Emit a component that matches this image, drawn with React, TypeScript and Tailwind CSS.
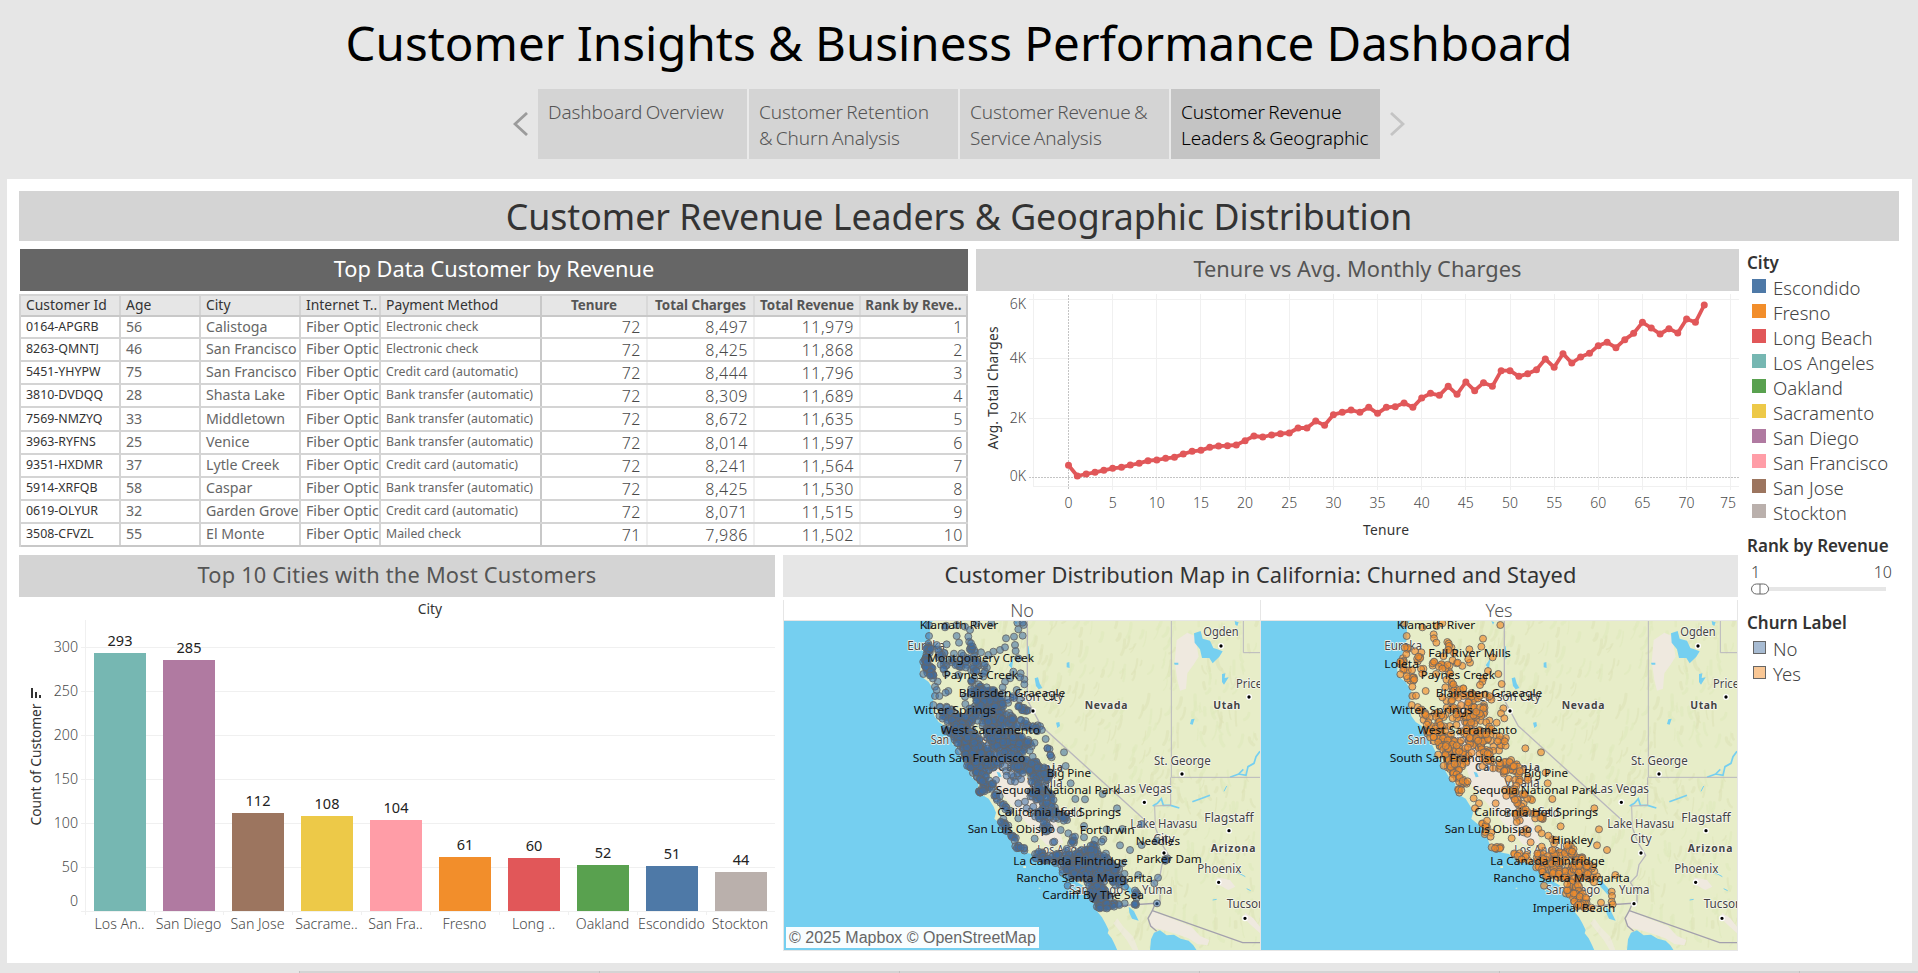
import type { ReactNode } from 'react';

const TABS = [
  { lines: ['Dashboard Overview'], active: false },
  { lines: ['Customer Retention', '& Churn Analysis'], active: false },
  { lines: ['Customer Revenue &', 'Service Analysis'], active: false },
  { lines: ['Customer Revenue', 'Leaders & Geographic'], active: true },
];

const ROWS = [
  ['0164-APGRB', '56', 'Calistoga', 'Electronic check', '72', '8,497', '11,979'],
  ['8263-QMNTJ', '46', 'San Francisco', 'Electronic check', '72', '8,425', '11,868'],
  ['5451-YHYPW', '75', 'San Francisco', 'Credit card (automatic)', '72', '8,444', '11,796'],
  ['3810-DVDQQ', '28', 'Shasta Lake', 'Bank transfer (automatic)', '72', '8,309', '11,689'],
  ['7569-NMZYQ', '33', 'Middletown', 'Bank transfer (automatic)', '72', '8,672', '11,635'],
  ['3963-RYFNS', '25', 'Venice', 'Bank transfer (automatic)', '72', '8,014', '11,597'],
  ['9351-HXDMR', '37', 'Lytle Creek', 'Credit card (automatic)', '72', '8,241', '11,564'],
  ['5914-XRFQB', '58', 'Caspar', 'Bank transfer (automatic)', '72', '8,425', '11,530'],
  ['0619-OLYUR', '32', 'Garden Grove', 'Credit card (automatic)', '72', '8,071', '11,515'],
  ['3508-CFVZL', '55', 'El Monte', 'Mailed check', '71', '7,986', '11,502'],
];

const CITIES = [
  { name: 'Escondido', color: 'bg-[#4e79a7]' },
  { name: 'Fresno', color: 'bg-[#f28e2b]' },
  { name: 'Long Beach', color: 'bg-[#e15759]' },
  { name: 'Los Angeles', color: 'bg-[#76b7b2]' },
  { name: 'Oakland', color: 'bg-[#59a14f]' },
  { name: 'Sacramento', color: 'bg-[#edc948]' },
  { name: 'San Diego', color: 'bg-[#b07aa1]' },
  { name: 'San Francisco', color: 'bg-[#ff9da7]' },
  { name: 'San Jose', color: 'bg-[#9c755f]' },
  { name: 'Stockton', color: 'bg-[#bab0ac]' },
];

const BARS = [
  { label: 'Los An..', value: 293, top: 56, color: '#76b7b2' },
  { label: 'San Diego', value: 285, top: 63, color: '#b07aa1' },
  { label: 'San Jose', value: 112, top: 216, color: '#9c755f' },
  { label: 'Sacrame..', value: 108, top: 219, color: '#edc948' },
  { label: 'San Fra..', value: 104, top: 223, color: '#ff9da7' },
  { label: 'Fresno', value: 61, top: 260, color: '#f28e2b' },
  { label: 'Long ..', value: 60, top: 261, color: '#e15759' },
  { label: 'Oakland', value: 52, top: 268, color: '#59a14f' },
  { label: 'Escondido', value: 51, top: 269, color: '#4e79a7' },
  { label: 'Stockton', value: 44, top: 275, color: '#bab0ac' },
];

/* Average total charge per tenure month, in thirds of a pixel from the plot's top. */
const LINE = [
  676, 708, 702, 697, 691, 685, 682, 675, 670, 662, 660, 655, 652, 642, 634, 631, 622, 618, 617, 615, 602, 588, 591,
  585, 581, 579, 564, 564, 543, 556, 524, 517, 510, 517, 502, 520, 502, 500, 489, 502, 474, 460, 466, 439, 463, 426,
  452, 428, 439, 392, 392, 409, 401, 389, 357, 382, 341, 369, 351, 340, 317, 307, 323, 299, 280, 247, 264, 282, 266,
  279, 237, 247, 195,
];

function PanelTitle({ className, children }: { className: string; children: ReactNode }) {
  return (
    <h3 className={`flex h-[42px] shrink-0 items-center justify-center pb-[3px] text-[21.8px] leading-none ${className}`}>
      {children}
    </h3>
  );
}

function StoryNav() {
  return (
    <nav className="flex h-[70px] items-center justify-center">
      <svg className="mr-[10px] mb-px h-6 w-[15px]" viewBox="0 0 15 24" fill="none" stroke="#9b9b9b" strokeWidth="2.8">
        <path d="M14 1 L2 12 L14 23" />
      </svg>
      <div className="flex h-full gap-[2px] bg-[#eaeaea]">
        {TABS.map((t) => (
          <div
            key={t.lines[0]}
            className={`w-[209px] pt-[10px] pl-[10px] text-[19px] leading-[26px] font-light tracking-[-0.1px] [word-spacing:-1.5px] whitespace-nowrap ${
              t.active ? 'bg-[#c4c4c4] text-black' : 'bg-[#d4d4d4] text-[#555]'
            }`}
          >
            {t.lines.map((l) => (
              <div key={l}>{l}</div>
            ))}
          </div>
        ))}
      </div>
      <svg className="mb-px ml-[10px] h-6 w-[15px]" viewBox="0 0 15 24" fill="none" stroke="#c4c4c4" strokeWidth="2.8">
        <path d="M1 1 L13 12 L1 23" />
      </svg>
    </nav>
  );
}

const GRID = 'grid grid-cols-[100px_80px_100px_80px_161px_106px_107px_106px_107px]';

function CustomerTable() {
  const dim = 'border-r-2 border-[#d4d4d4] pl-[5px] flex items-center overflow-hidden whitespace-nowrap';
  const num = 'border-r-2 border-[#f0f0f0] pr-[5px] flex items-center justify-end text-[16px] font-light tracking-[0.5px] text-[#4a4a4a]';
  const head = 'flex items-center justify-center border-r-2 border-[#d9d9d9] pt-px text-[13.4px] font-bold text-[#555] whitespace-nowrap';
  return (
    <div className="flex h-[253px] w-[949px] flex-col border-l-2 border-[#d4d4d4] leading-none">
      <div className={`${GRID} h-[23px] border-t-2 border-b-2 border-t-[#d4d4d4] border-b-[#c8c8c8] bg-[#e6e6e6] text-[13.9px] text-[#333]`}>
        <div className={`${dim} pb-px`}>Customer Id</div>
        <div className={`${dim} pb-px`}>Age</div>
        <div className={`${dim} pb-px`}>City</div>
        <div className={`${dim} pb-px`}>Internet T..</div>
        <div className="flex items-center border-r-2 border-[#c8c8c8] pb-px pl-[5px]">Payment Method</div>
        <div className={head}>Tenure</div>
        <div className={head}>Total Charges</div>
        <div className={head}>Total Revenue</div>
        <div className="flex items-center justify-center border-r-2 border-[#c8c8c8] pt-px text-[13.4px] font-bold whitespace-nowrap text-[#555]">
          Rank by Reve..
        </div>
      </div>
      {ROWS.map((r, i) => (
        <div
          key={r[0]}
          className={`${GRID} border-b-2 text-[14.2px] text-[#666] ${i === 0 ? 'h-[22px]' : i === 4 ? 'h-[24px]' : 'h-[23px]'} ${
            i === 9 ? 'border-[#c8c8c8]' : 'border-[#d4d4d4]'
          }`}
        >
          <div className={`${dim} text-[12.4px] text-[#333]`}>{r[0]}</div>
          <div className={dim}>{r[1]}</div>
          <div className={dim}>{r[2]}</div>
          <div className={dim}>Fiber Optic</div>
          <div className="flex items-center border-r-2 border-[#c8c8c8] pl-[5px] text-[12.3px] whitespace-nowrap">{r[3]}</div>
          <div className={num}>{r[4]}</div>
          <div className={num}>{r[5]}</div>
          <div className={num}>{r[6]}</div>
          <div className="flex items-center justify-end border-r-2 border-[#c8c8c8] pr-[3px] text-[16px] font-light tracking-[0.5px] text-[#4a4a4a]">
            {i + 1}
          </div>
        </div>
      ))}
    </div>
  );
}

function LineChart() {
  const x = (m: number) => 92.5 + m * 8.83;
  const points = LINE.map((v, m) => ({ x: x(m), y: v / 3 - 51 }));
  return (
    <svg className="block h-[256px] w-[763px]" viewBox="0 0 763 256">
      <g stroke="#f0f0f0" shapeRendering="crispEdges">
        <path d="M57.5 3V196M57.5 195.5H763M57.5 8.5H763M57.5 67.5H763M57.5 127.5H763M53 8.5H58M53 67.5H58M53 127.5H58" />
        {Array.from({ length: 15 }, (_, i) => (
          <path key={i} d={`M${x((i + 1) * 5)} 3V199`} />
        ))}
      </g>
      <path d="M92.5 4V199M53 186.5H763" stroke="#c4c4c4" strokeDasharray="2 1" shapeRendering="crispEdges" />
      <polyline points={points.map((p) => `${p.x},${p.y}`).join(' ')} fill="none" stroke="#e15759" strokeWidth="3.8" strokeLinejoin="round" />
      {points.map((p, i) => (
        <circle key={i} cx={p.x} cy={p.y} r="3.5" fill="#e15759" />
      ))}
      <g fontSize="14" fontWeight="300" fill="#4a4a4a">
        {[['6K', 17.5], ['4K', 71.5], ['2K', 131.5], ['0K', 189.5]].map(([t, y]) => (
          <text key={t} x="50" y={y} textAnchor="end">{t}</text>
        ))}
        {Array.from({ length: 16 }, (_, i) => (
          <text key={i} x={i === 15 ? 752 : x(i * 5)} y="217" textAnchor="middle">{i * 5}</text>
        ))}
      </g>
      <g fontSize="13.8" fill="#333">
        <text x="410" y="244" textAnchor="middle" textLength="46">Tenure</text>
        <text transform="translate(22 158.5) rotate(-90)" textLength="123">Avg. Total Charges</text>
      </g>
    </svg>
  );
}

function BarChart() {
  return (
    <svg className="block h-[366px] w-[756px]" viewBox="0 0 756 366">
      <text x="411" y="17" fontSize="13.8" fill="#333" textAnchor="middle">City</text>
      <g stroke="#f0f0f0" shapeRendering="crispEdges">
        <path d="M66.5 23V318" />
        {[50, 94, 138, 182, 226, 270, 314].map((y) => (
          <path key={y} d={`M62 ${y + 0.5}H756`} />
        ))}
        {BARS.slice(1).map((b, i) => (
          <path key={b.label} d={`M${135.5 + i * 69} 314V318`} />
        ))}
      </g>
      <g fontSize="14.2" fontWeight="300" fill="#4a4a4a" textAnchor="end">
        {[['300', 55], ['250', 99], ['200', 143], ['150', 187], ['100', 231], ['50', 275], ['0', 309]].map(([t, y]) => (
          <text key={t} x="59" y={y}>{t}</text>
        ))}
      </g>
      {BARS.map((b, i) => (
        <g key={b.label} textAnchor="middle">
          <rect x={75 + i * 69} y={b.top} width="52" height={314 - b.top} fill={b.color} />
          <text x={101 + i * 69} y={b.top - 7} fontSize="14.5" fill="#222">{b.value}</text>
          <text x={i === 9 ? 721 : 100.5 + i * 69} y="332" fontSize="14.2" fontWeight="300" fill="#4a4a4a">{b.label}</text>
        </g>
      ))}
      <text transform="translate(22 228.5) rotate(-90)" fontSize="13.8" fill="#333" textLength="122">Count of Customer</text>
      <path d="M12 91h2v10h-2zM16 95h2v6h-2zM20 98h2v3h-2z" fill="#333" />
    </svg>
  );
}

function makeRandom(seed: number) {
  let s = seed;
  return () => {
    s = (s * 1664525 + 1013904223) % 4294967296;
    return s / 4294967296;
  };
}

/* Customer concentrations: start x/y, end x/y, spread, count. Units are thirds of a pixel. */
const CLUSTERS = [
  [448, 165, 436, 225, 9, 22], [436, 215, 468, 275, 11, 32], [480, 185, 492, 245, 13, 16], [530, 210, 612, 240, 22, 38],
  [570, 165, 590, 195, 12, 10], [580, 270, 600, 310, 16, 14], [585, 305, 700, 330, 22, 44], [625, 335, 668, 440, 48, 170],
  [718, 350, 742, 366, 8, 10], [590, 330, 580, 405, 24, 34], [690, 392, 778, 415, 13, 30], [485, 365, 560, 400, 22, 46],
  [520, 412, 585, 470, 30, 120], [560, 470, 620, 520, 34, 150], [575, 525, 605, 550, 18, 36], [600, 560, 628, 590, 17, 28],
  [605, 600, 605, 603, 9, 10], [620, 445, 735, 465, 30, 110], [655, 500, 785, 545, 26, 80], [645, 605, 685, 670, 9, 15],
  [660, 688, 705, 745, 10, 20], [708, 772, 735, 776, 7, 10], [745, 520, 800, 565, 22, 44], [755, 585, 810, 640, 28, 64],
  [760, 668, 850, 678, 17, 36], [850, 682, 855, 685, 10, 8], [775, 695, 820, 728, 13, 11], [765, 794, 835, 812, 12, 28],
  [840, 797, 965, 805, 22, 90], [862, 830, 965, 855, 30, 180], [960, 810, 1018, 868, 24, 80], [935, 770, 940, 785, 14, 18],
  [940, 890, 975, 935, 24, 90], [955, 948, 1015, 945, 9, 24], [805, 470, 815, 500, 6, 6], [1067, 905, 1067, 945, 6, 9],
  [1156, 806, 1160, 812, 6, 4], [880, 750, 890, 760, 14, 6], [695, 555, 735, 545, 24, 18],
];

const NO_POINTS = [
  447, 106, 447, 138, 498, 107, 530, 105, 555, 110, 590, 100, 634, 100, 495, 112, 530, 138, 537, 158, 570, 120, 565, 140,
  573, 160, 500, 163, 470, 165, 603, 187, 545, 190, 660, 180, 675, 172, 640, 185, 625, 195, 678, 145, 702, 140, 715, 118,
  731, 105, 728, 137, 705, 165, 707, 183, 715, 205, 712, 98, 728, 98, 430, 252, 465, 318, 478, 318, 505, 303, 497, 308,
  465, 290, 470, 300, 460, 345, 480, 350, 700, 245, 722, 250, 733, 268, 733, 283, 720, 262, 690, 265, 675, 275, 668, 292,
  620, 292, 640, 300, 710, 300, 555, 320, 556, 342, 535, 255, 715, 640, 715, 685, 735, 635, 740, 655, 760, 650, 764, 746,
  819, 757, 823, 755, 842, 720, 865, 730, 885, 740, 912, 708, 912, 742, 945, 750, 970, 748, 965, 755, 980, 718, 1027, 717,
  1085, 702, 1020, 766, 1050, 780, 1085, 765, 1130, 752, 797, 447, 852, 487, 857, 528, 872, 580, 886, 627, 915, 628,
  968, 612, 1011, 655, 1134, 863, 1123, 880, 1131, 940, 1075, 855, 1034, 940, 1018, 945, 1035, 890, 1027, 820, 863, 887,
  715, 350, 743, 455, 758, 500, 648, 570, 680, 557, 705, 575,
];

const YES_POINTS = [
  449, 138, 442, 100, 496, 112, 539, 108, 556, 100, 530, 133, 531, 145, 538, 158, 730, 105, 678, 146, 673, 170, 707, 202,
  576, 168, 574, 180, 637, 178, 639, 218, 634, 208, 474, 184, 489, 205, 484, 200, 527, 220, 531, 215, 556, 236, 430, 253,
  465, 240, 466, 290, 506, 303, 466, 318, 477, 317, 464, 345, 693, 243, 724, 252, 734, 282, 679, 265, 676, 275, 669, 285,
  619, 295, 556, 322, 589, 283, 565, 292, 537, 252, 739, 355, 732, 370, 742, 385, 719, 398, 805, 475, 852, 487, 866, 548,
  872, 580, 886, 627, 1012, 655, 911, 709, 1026, 718, 1020, 766, 1050, 780, 1075, 855, 861, 887, 1064, 905, 1065, 918,
  1064, 935, 1067, 943, 1032, 938, 844, 717, 854, 730, 874, 737, 764, 745, 821, 757, 854, 770, 690, 692, 650, 625,
  666, 640, 654, 655, 729, 775, 704, 772, 714, 775, 716, 640, 722, 454, 743, 454,
];

const sparse = new Set([8, 10, 19, 34, 35, 36, 38]);

function buildDots(points: number[], density: number, seed: number, skipSparse: boolean) {
  const rnd = makeRandom(seed);
  const out: [number, number][] = [];
  CLUSTERS.forEach(([x1, y1, x2, y2, spread, n], c) => {
    if (skipSparse && sparse.has(c)) return;
    for (let i = 0; i < n * density; i++) {
      const t = rnd();
      const a = rnd() * Math.PI * 2;
      const r = Math.sqrt(rnd()) * spread;
      out.push([x1 + (x2 - x1) * t + Math.cos(a) * r, y1 + (y2 - y1) * t + Math.sin(a) * r]);
    }
  });
  for (let i = 0; i < points.length; i += 2) out.push([points[i], points[i + 1]]);
  return out;
}

function buildRelief() {
  const rnd = makeRandom(77);
  const out: { d: string; light: boolean; w: number }[] = [];
  for (let i = 0; i < 620; i++) {
    const x = 560 + rnd() * 880;
    const y = 93 + rnd() * 980;
    if (x < 1010 && y > 960 && x < 560 + (y - 300) * 0.6) continue;
    if (y > 330 && x < 470 + (y - 330) * 0.75) continue;
    const len = 12 + rnd() * 34;
    const lean = x > 1180 ? rnd() * 30 - 15 : 4 + rnd() * 14;
    out.push({
      d: `M${x.toFixed(0)} ${y.toFixed(0)}q${(lean * 0.9).toFixed(0)} ${(-len * 0.3).toFixed(0)} ${lean.toFixed(0)} ${(-len).toFixed(0)}`,
      light: rnd() > 0.5,
      w: 3 + rnd() * 8,
    });
  }
  return out;
}

const RELIEF = buildRelief();

type Label = [string, number, number, number];

const SHARED_LABELS: Label[] = [
  ['Klamath River', 419, 118, 236], ['Paynes Creek', 491, 266, 223], ['Blairsden Graeagle', 536, 320, 320],
  ['Witter Springs', 401, 371, 247], ['West Sacramento', 482, 431, 298], ['South San Francisco', 398, 515, 338],
  ['Big Pine', 800, 560, 133], ['Sequoia National Park', 647, 611, 372], ['California Hot Springs', 652, 677, 371],
  ['San Luis Obispo', 563, 728, 262], ['La Canada Flintridge', 700, 824, 343], ['Rancho Santa Margarita', 709, 875, 409],
];
const NO_LABELS: Label[] = [
  ...SHARED_LABELS, ['Montgomery Creek', 442, 215, 320], ['Fort Irwin', 899, 731, 165], ['Needles', 1067, 766, 133],
  ['Parker Dam', 1069, 818, 196], ['Cardiff By The Sea', 787, 926, 305],
];
const YES_LABELS: Label[] = [
  ...SHARED_LABELS, ['Fall River Mills', 514, 200, 247], ['Loleta', 382, 235, 104], ['Hinkley', 884, 761, 124],
  ['Imperial Beach', 827, 965, 248],
];

const PLACES: Label[] = [
  ['Eureka', 382, 179, 113], ['San Francisco', 452, 462, 205], ['Carson City', 662, 334, 189], ['Visalia', 742, 590, 106],
  ['Bakersfield', 742, 680, 165], ['Los Angeles', 772, 792, 178], ['San Diego', 866, 911, 164], ['Yuma', 1086, 911, 91],
  ['Ogden', 1270, 138, 106], ['Price', 1368, 293, 78], ['St. George', 1122, 524, 170], ['Las Vegas', 1012, 608, 164],
  ['Flagstaff', 1273, 695, 148], ['Lake Havasu', 1051, 715, 201], ['City', 1120, 758, 64], ['Phoenix', 1252, 848, 132],
  ['Tucson', 1340, 955, 116],
];
const STATES: Label[] = [
  ['Nevada', 914, 356, 128], ['Utah', 1300, 356, 81], ['Arizona', 1292, 787, 134], ['California', 654, 542, 195],
];
const TOWNS = [
  [1323, 168], [1407, 321], [759, 363], [1206, 552], [1093, 637], [1347, 722], [1152, 789], [1316, 877], [1131, 941],
  [1395, 985],
];

const LAND =
  'M458 93L450 110L449 150L442 175L430 205L422 228L420 250L430 264L446 276L456 292L464 306L460 330L458 352L463 378L476 396L494 408L506 426L514 440L522 458L532 478L546 506L558 530L576 562L596 582L592 600L606 614L626 626L641 650L648 668L643 686L662 702L681 714L690 732L695 756L706 778L736 788L756 792L766 804L800 814L830 824L844 844L852 852L880 870L910 887L928 906L940 936L950 962L966 982L976 1000L986 1020L983 1030L995 1045L1005 1065L1012 1081H1441V93Z';

function MapPane({ points, density, seed, fill, opacity, labels, skipSparse }: {
  points: number[];
  density: number;
  seed: number;
  fill: string;
  opacity: number;
  labels: Label[];
  skipSparse: boolean;
}) {
  return (
    <svg className="block h-[329px] w-[476px]" viewBox="12 93 1428 987">
      <rect x="0" y="90" width="1450" height="1000" fill="#75cff0" />
      <path d={LAND} fill="#e7edc8" />
      <g fill="none" strokeLinecap="round">
        {RELIEF.map((r, i) => (
          <path key={i} d={r.d} strokeWidth={r.w} stroke={r.light ? '#dfe9bc' : '#dde2b8'} opacity="0.6" />
        ))}
      </g>
      <g fill="#efe9df">
        <path d="M1190 150L1222 128L1245 138L1256 200L1240 225L1222 250L1218 296L1200 302L1192 270L1184 215Z" />
        <path d="M600 330L640 300L660 360L650 430L700 500L740 560L790 620L830 700L850 760L800 765L740 700L690 640L645 590L625 520L610 430Z" />
        <path d="M1108 985L1116 963L1180 988L1232 1008L1260 1038L1288 1050L1282 1066L1252 1062L1225 1045L1182 1030L1140 1018L1110 1012Z" />
        <path d="M1310 862L1350 870L1366 890L1345 900L1318 886ZM1395 968L1420 985L1440 1010V1030L1412 1004L1392 985Z" />
        <path d="M1000 1000L1012 985L1030 1010L1060 1040L1075 1080H1058L1040 1050Z" opacity="0.7" />
      </g>
      <g fill="#75cff0">
        <path d="M1242 130L1262 123L1268 146L1290 152L1300 174L1312 178L1328 184L1318 200L1298 220L1288 204L1266 204L1260 178L1244 158Z" />
        <path d="M764 265L774 262L779 280L787 294L776 298L768 288ZM828 398L838 396L840 408L832 414ZM860 218L868 216L869 234L860 232ZM686 226L700 205L696 236Z" />
        <path d="M1326 252L1336 250L1334 264L1346 262L1332 284L1326 276ZM1234 388L1244 386L1238 404L1230 402ZM1182 218H1195V224H1184Z" />
        <path d="M742 170L746 168L750 200L746 210ZM650 545L660 548L665 560L656 562ZM1364 93L1376 97L1372 108L1366 104ZM703 93L712 97L708 104Z" />
        <path d="M1018 868L1036 876L1062 904L1052 914L1032 892ZM1046 950L1062 964L1076 992L1056 986L1048 968Z" />
        <path d="M1110 1081L1113 1048L1122 1028L1140 1021L1160 1036L1182 1034L1202 1046L1226 1052L1240 1066L1250 1081Z" />
      </g>
      <g fill="none" stroke="#75cff0" strokeWidth="5">
        <path d="M1118 648L1132 640L1144 626L1150 646L1172 646L1198 654M1237 635L1262 626L1290 616" />
        <path d="M1350 562L1376 552L1398 556L1404 530L1422 520L1428 500L1440 484M1376 552L1390 538" />
        <path d="M1332 604L1340 588M1374 848L1396 860M1400 896L1412 902M1298 930L1310 928" strokeWidth="3" />
      </g>
      <g fill="none" stroke="#b9b7bd" strokeWidth="4">
        <path d="M742 93V330L784 408L1090 686L1126 712L1142 756L1166 796L1146 824L1140 856L1120 878L1140 906V940" />
        <path d="M1174 93V562H1440M1172 562V646L1124 648L1126 712M1390 93V188H1440" strokeWidth="3" />
        <path d="M975 952L1050 945L1126 940L1117 962L1388 1058H1440M1117 962L1104 985L1112 1008L1130 1024" stroke="#a3a0ad" />
      </g>
      <path d="M730 828h8v6h-8zM752 822h14v4h-14zM862 896l6 6l-4 2zM776 893h5v3h-5z" fill="#e7edc8" />
      <g fill="#444" fontSize="38" stroke="#f6f6ee" strokeWidth="5" strokeLinejoin="round" paintOrder="stroke">
        {PLACES.map(([t, x, y, w]) => (
          <text key={t + x} x={x} y={y} textLength={w} lengthAdjust="spacingAndGlyphs">{t}</text>
        ))}
        <g fontSize="31" fontWeight="700">
          {STATES.map(([t, x, y, w]) => (
            <text key={t} x={x} y={y} textLength={w}>{t}</text>
          ))}
        </g>
      </g>
      {TOWNS.map(([x, y]) => (
        <circle key={x} cx={x} cy={y} r="7" fill="#000" stroke="#fff" strokeWidth="4" />
      ))}
      <g fill={fill} fillOpacity={opacity} stroke="#666" strokeOpacity="0.85" strokeWidth="3">
        {buildDots(points, density, seed, skipSparse).map(([x, y], i) => (
          <circle key={i} cx={x.toFixed(1)} cy={y.toFixed(1)} r="10.5" />
        ))}
      </g>
      <g fill="#111" fontSize="35">
        {labels.map(([t, x, y, w]) => (
          <text key={t} x={x} y={y} textLength={w} lengthAdjust="spacingAndGlyphs">{t}</text>
        ))}
      </g>
    </svg>
  );
}

function MapPanel() {
  return (
    <section className="w-[955px]">
      <PanelTitle className="bg-[#e6e6e6] tracking-[0.08px] text-[#333]">
        Customer Distribution Map in California: Churned and Stayed
      </PanelTitle>
      <div className="relative mt-[3px] flex border-r border-l border-[#e6e6e6]">
        <div className="w-[477px] border-r border-[#e6e6e6]">
          <div className="flex h-[21px] items-center justify-center border-b border-[#e6e6e6] text-[18px] leading-none font-light text-[#555]">No</div>
          <MapPane points={NO_POINTS} density={1} seed={11} fill="#3d6ea6" opacity={0.55} labels={NO_LABELS} skipSparse={false} />
        </div>
        <div className="w-[476px]">
          <div className="flex h-[21px] items-center justify-center border-b border-[#e6e6e6] text-[18px] leading-none font-light text-[#555]">Yes</div>
          <MapPane points={YES_POINTS} density={0.42} seed={29} fill="#f28e2b" opacity={0.65} labels={YES_LABELS} skipSparse />
        </div>
        <div className="absolute bottom-[2px] left-[2px] flex h-[21px] w-[253px] items-center justify-center bg-white/95 font-['Liberation_Sans',sans-serif] text-[16px] leading-none whitespace-nowrap text-[#666]">
          © 2025 Mapbox © OpenStreetMap
        </div>
      </div>
      <div className="h-px bg-[#e6e6e6]" />
    </section>
  );
}

function Sidebar() {
  const title = 'text-[17px] leading-[22px] font-semibold text-[#333]';
  return (
    <aside className="ml-[8px] w-[150px]">
      <h4 className={`${title} mt-[3px]`}>City</h4>
      <ul className="mt-px pl-[5px]">
        {CITIES.map((c) => (
          <li key={c.name} className="flex h-[25px] items-center text-[18.6px] leading-none font-light whitespace-nowrap text-[#444]">
            <span className={`mr-[7px] mb-[3px] size-[14px] shrink-0 ${c.color}`} />
            <span className="mt-px">{c.name}</span>
          </li>
        ))}
      </ul>
      <h4 className={`${title} mt-[10px] whitespace-nowrap`}>Rank by Revenue</h4>
      <div className="mt-[6px] flex justify-between pr-[5px] pl-[4px] text-[16px] leading-[18px] font-light text-[#444]">
        <span>1</span>
        <span>10</span>
      </div>
      <svg className="mt-[2px] ml-[4px] block h-3 w-[136px]" viewBox="0 0 136 12">
        <rect x="16" y="4" width="119" height="4" fill="#e6e6e6" />
        <rect x="0.5" y="1" width="17" height="10" rx="5" fill="#fff" stroke="#666" />
        <path d="M9 1V11" stroke="#666" />
      </svg>
      <h4 className={`${title} mt-[17px]`}>Churn Label</h4>
      <ul className="mt-[2px] pl-[6px] text-[18.6px] leading-none font-light text-[#444]">
        <li className="flex h-[25px] items-center">
          <span className="mr-[7px] mb-[2px] size-[13px] border border-[#666] bg-[#a7bbd2]" />
          <span className="mt-px">No</span>
        </li>
        <li className="flex h-[25px] items-center">
          <span className="mr-[7px] mb-[2px] size-[13px] border border-[#666] bg-[#f9c795]" />
          <span className="mt-px">Yes</span>
        </li>
      </ul>
    </aside>
  );
}

export default function App() {
  return (
    <div className="flex h-[973px] w-[1918px] flex-col overflow-hidden bg-[#e6e6e6] font-['Noto_Sans',sans-serif]">
      <h1 className="flex h-[89px] shrink-0 items-center justify-center pb-[4px] text-[47.5px] leading-none text-black">
        Customer Insights &amp; Business Performance Dashboard
      </h1>
      <StoryNav />
      <main className="mt-5 ml-[7px] flex h-[784px] w-[1905px] shrink-0 flex-col bg-white pt-3 pl-3">
        <h2 className="flex h-[50px] w-[1880px] shrink-0 items-center justify-center bg-[#d4d4d4] pt-px text-[35.7px] leading-none text-[#333]">
          Customer Revenue Leaders &amp; Geographic Distribution
        </h2>
        <div className="mt-2 flex">
          <div className="flex w-[1720px] flex-col">
            <div className="flex h-[306px] gap-2">
              <section className="w-[949px]">
                <PanelTitle className="ml-px bg-[#666] text-white">Top Data Customer by Revenue</PanelTitle>
                <div className="mt-[3px]">
                  <CustomerTable />
                </div>
              </section>
              <section className="w-[763px]">
                <PanelTitle className="bg-[#d4d4d4] text-[#555]">Tenure vs Avg. Monthly Charges</PanelTitle>
                <LineChart />
              </section>
            </div>
            <div className="flex gap-2">
              <section className="w-[756px]">
                <PanelTitle className="bg-[#d4d4d4] tracking-[0.2px] text-[#555]">Top 10 Cities with the Most Customers</PanelTitle>
                <BarChart />
              </section>
              <MapPanel />
            </div>
          </div>
          <Sidebar />
        </div>
      </main>
      <footer className="mt-2 ml-[299px] flex h-[2px] shrink-0 bg-[#d4d4d4]">
        {[0, 1, 2, 3, 4, 5].map((i) => (
          <div key={i} className="h-full w-[300px] shrink-0 border-l border-[#c0c0c0]" />
        ))}
      </footer>
    </div>
  );
}
